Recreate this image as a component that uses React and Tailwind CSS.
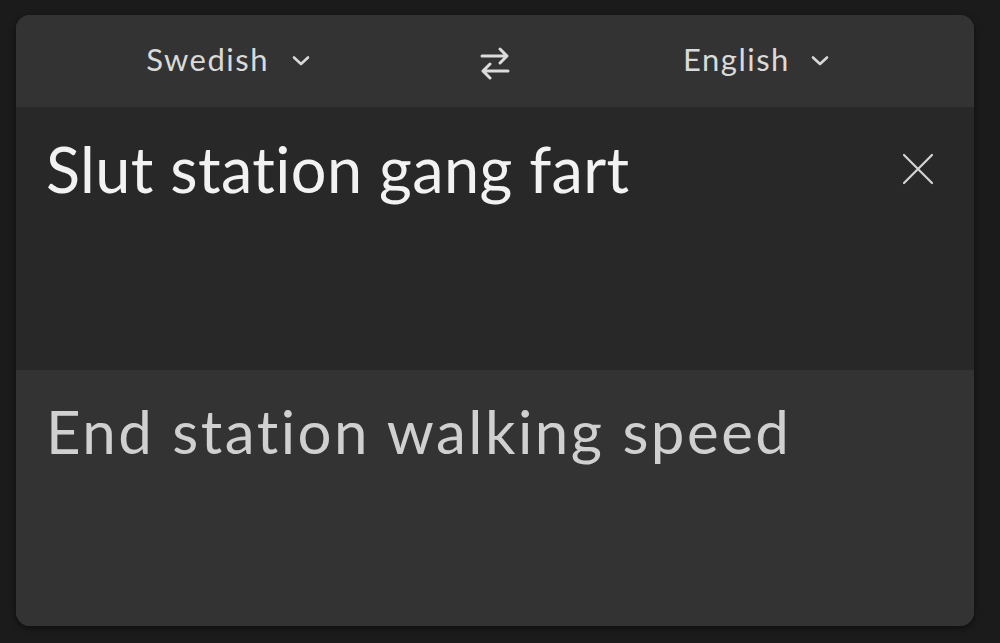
import React from "react";

const Chevron = () => (
  <svg width="20" height="14" viewBox="0 0 20 14" fill="none" className="text-[#d8d8d8]">
    <path d="M3 3.5 L10 10 L17 3.5" stroke="currentColor" strokeWidth="2.6" strokeLinecap="round" strokeLinejoin="round" />
  </svg>
);

const SwapIcon = () => (
  <svg width="32" height="38" viewBox="0 0 32 38" fill="none" className="text-[#dcdcdc]">
    <path d="M3 14 H28 M21 7 L28 14 L21 21" stroke="currentColor" strokeWidth="3" strokeLinecap="round" strokeLinejoin="round" />
    <path d="M29 29 H4 M11 22 L4 29 L11 36" stroke="currentColor" strokeWidth="3" strokeLinecap="round" strokeLinejoin="round" />
  </svg>
);

const CloseIcon = () => (
  <svg width="32" height="32" viewBox="0 0 32 32" fill="none" className="text-[#d4d4d4]">
    <path d="M2 2 L30 30 M30 2 L2 30" stroke="currentColor" strokeWidth="2.2" strokeLinecap="round" />
  </svg>
);

export default function App() {
  return (
    <div
      className="w-[1000px] h-[643px] bg-[#1b1b1b] pt-[15px] pl-[16px] [font-variant-ligatures:none]"
      style={{ fontFamily: "Lato, 'Open Sans', sans-serif" }}
    >
      <div className="w-[958px] h-[611px] rounded-[14px] overflow-hidden flex flex-col bg-[#333333] shadow-[0_2px_6px_rgba(0,0,0,0.5)]">
        {/* language bar */}
        <div className="h-[92px] shrink-0 grid grid-cols-[1fr_auto_1fr] items-center bg-[#333333]">
          <div className="justify-self-end mr-[168px] flex items-center gap-[22px] text-[31px] text-[#dadada] tracking-[1.5px]">
            <span className="-mt-[3px]">Swedish</span>
            <Chevron />
          </div>
          <div className="flex items-center">
            <SwapIcon />
          </div>
          <div className="justify-self-start ml-[172px] flex items-center gap-[20px] text-[31px] text-[#dadada] tracking-[1.5px]">
            <span className="-mt-[3px]">English</span>
            <Chevron />
          </div>
        </div>

        {/* source text */}
        <div className="h-[263px] shrink-0 bg-[#282828] flex items-start justify-between pl-[30px] pr-[40px] pt-[22px]">
          <div className="text-[63px] leading-[80px] text-[#f2f2f2] tracking-[0.4px]">Slut station gang fart</div>
          <div className="mt-[24px]">
            <CloseIcon />
          </div>
        </div>

        {/* translation */}
        <div className="flex-1 bg-[#333333] pl-[30px] pt-[23px]">
          <div className="text-[60px] leading-[76px] text-[#d0d0d0] tracking-[2.5px]">End station walking speed</div>
        </div>
      </div>
    </div>
  );
}
